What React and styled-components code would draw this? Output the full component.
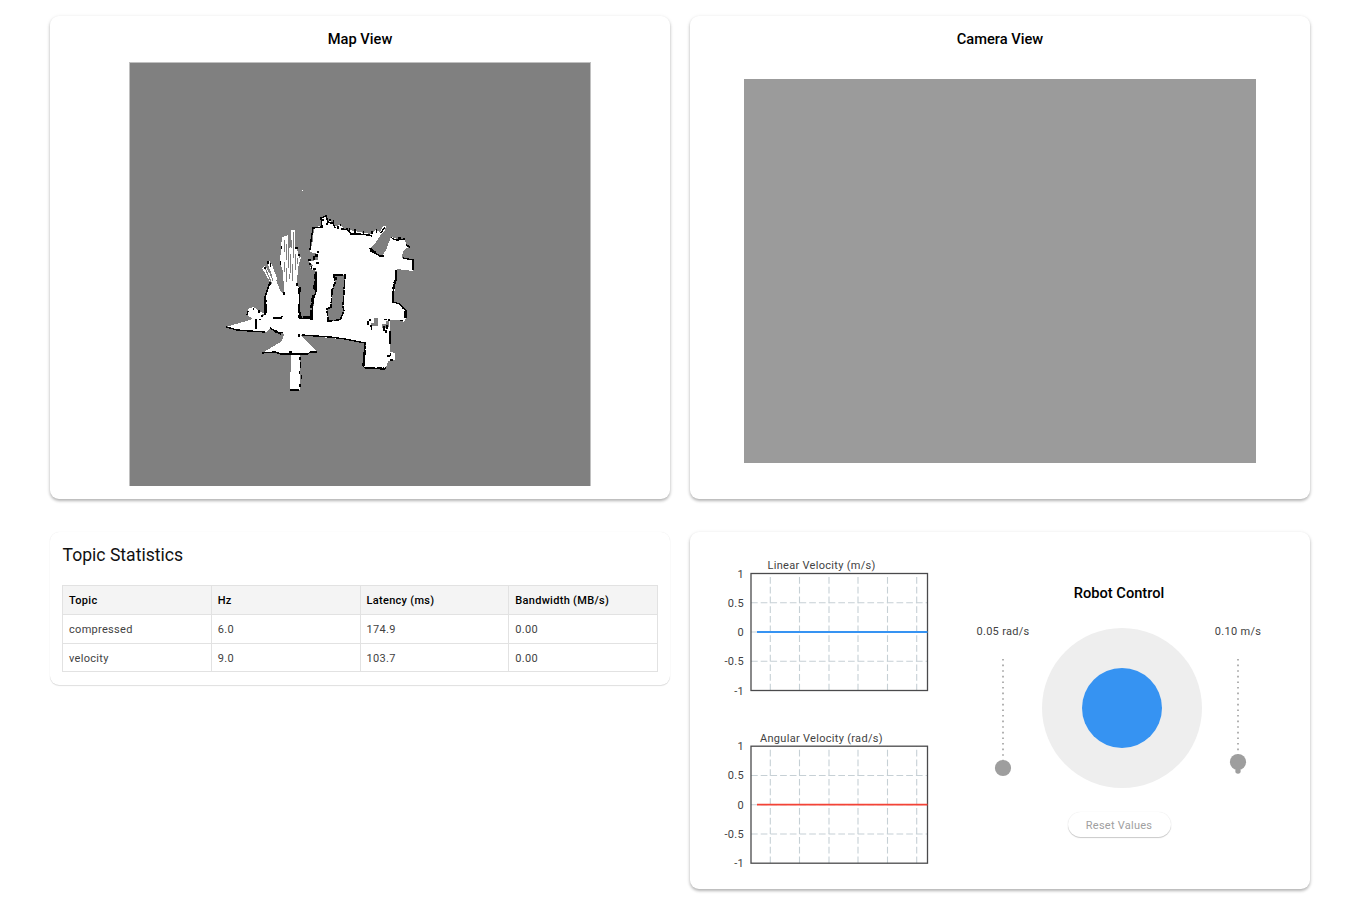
import React from "react";
import styled, { createGlobalStyle } from "styled-components";

const GlobalStyle = createGlobalStyle`
  * { box-sizing: border-box; }
  html, body { margin: 0; padding: 0; background: #fff; overflow: hidden; }
  body { font-family: Roboto, "Liberation Sans", sans-serif; font-size: 11px; letter-spacing: 0.3px; color: #424242; }
`;

const Page = styled.main`
  display: grid;
  grid-template-columns: 620px 620px;
  grid-template-rows: 483px 357px;
  gap: 33px 20px;
  align-items: start;
  height: 898px;
  padding: 16px 0 0 50px;
`;

const Card = styled.section`
  display: flex;
  flex-direction: ${(p) => (p.$row ? "row" : "column")};
  height: ${(p) => p.$height}px;
  background: #fff;
  border-radius: 9px;
  box-shadow: ${(p) =>
    p.$flat
      ? "0 1px 1px rgba(0,0,0,.12), 0 0 1px rgba(0,0,0,.1)"
      : "0 2px 3px rgba(0,0,0,.24), 0 1px 4px rgba(0,0,0,.1)"};
`;

const CardTitle = styled.h2`
  margin: 0;
  font-size: 14.67px;
  font-weight: 500;
  line-height: 20px;
  letter-spacing: 0;
  color: #000;
  text-align: center;
  padding-top: ${(p) => p.$top || 0}px;
`;

const MapCanvas = styled.svg`
  display: block;
  width: 462px;
  height: 424px;
  margin: 13px 0 0 79px;
`;

const CameraFeed = styled.div`
  width: 512px;
  height: 384px;
  margin: 30px 0 0 54px;
  background: #9b9b9b;
`;

const StatsTitle = styled.h2`
  margin: 0;
  padding: 11px 0 0 12.5px;
  font-size: 17.6px;
  font-weight: 400;
  line-height: 24px;
  letter-spacing: 0;
  color: #111;
`;

const Table = styled.table`
  width: 596px;
  margin: 18px 0 0 12px;
  border-collapse: collapse;
  table-layout: fixed;
`;

const HeadCell = styled.th`
  height: 29px;
  padding: 0 6px;
  border: 1px solid #e2e2e2;
  background: #f4f4f4;
  font-weight: 500;
  letter-spacing: 0.3px;
  color: #000;
  text-align: left;
`;

const Cell = styled.td`
  height: 28.5px;
  padding: 2px 6px 0;
  border: 1px solid #e2e2e2;
`;

const Charts = styled.div`
  width: 270px;
  padding-top: 26px;
`;

const ChartSvg = styled.svg`
  display: block;
  width: 250px;
  height: ${(p) => p.$height}px;
  font-size: 11px;
  fill: #424242;
`;

const Control = styled.div`
  width: 318px;
  padding-top: 51px;
`;

const ControlRow = styled.div`
  display: flex;
  height: 185px;
  padding: 25px 0 0 8px;
`;

const SliderBox = styled.div`
  width: ${(p) => p.$width}px;
  margin-top: -3px;
  text-align: center;
  white-space: nowrap;
  line-height: 14px;
`;

const SliderTrack = styled.svg`
  display: block;
  width: 20px;
  height: 130px;
  margin: 16px auto 0;
`;

const JoystickBase = styled.div`
  display: grid;
  place-items: center;
  width: 160px;
  height: 160px;
  margin: 0 0 0 4px;
  border-radius: 50%;
  background: #eee;
`;

const JoystickKnob = styled.div`
  width: 80px;
  height: 80px;
  border-radius: 50%;
  background: #3693f2;
`;

const ResetButton = styled.button`
  display: block;
  width: 103px;
  height: 25px;
  margin: 24px auto 0;
  padding: 2px 0 0;
  border: 0;
  border-radius: 13px;
  background: #fff;
  box-shadow: 0 1px 1px rgba(0,0,0,.2), 0 0 1px rgba(0,0,0,.12);
  font: inherit;
  letter-spacing: 0.25px;
  color: #a0a0a0;
`;

const FREE_SPACE =
  "M314 227L322 226L321 218L326 216L328 221L333 222L334 226L341 225L344 229L350 230L354 231L371 234L375 230L380 232L383 226L386 226L385 230L380 236L376 242L370 248L371 251L382 256L386 250L391 237L397 239L405 239L406 244L410 246L403 251L402 258L414 260L413 271L397 269L396 280L393 303L400 304L403 308L406 310L406 318L404 322L400 320L390 320L390 352L395 353L395 360L388 361L386 368L365 368L363 366L366 343L350 340L300 335L306 340L317 352L302 353L300 355L300 390L290 390L291 354L262 353L274 346L282 341L284 334L270 328L266 332L245 331L226 327L253 319L247 315L248 309L253 307L263 313L265 313L266 297L270 282L262 268L265 266L270 274L272 275L267 262L269 260L272 265L283 294L284 290L283 272L280 262L281 248L282 237L288 235L289 248L291 247L291 230L295 230L295 248L297 249L299 258L301 257L298 268L297 283L299 288L300 318L312 319L316 284L317 271L312 270L309 267L313 266L309 261L318 260L318 254L310 252L313 240Z";
const WALLS =
  "M310 250L311 240L313 228L322 227L321 218L326 216L328 222L333 223L335 228M341 229L348 230L351 234L369 235L372 236M381 233L385 227M370 248L371 251L380 256L384 256M391 237L393 239L397 240L405 239M406 245L410 247M403 258L413 260L413 270M396 270L396 280L394 286L393 302L400 304L403 308L406 310L406 318M390 331L390 344M386 368L384 369L365 368L363 366L365 343L350 340L345 339L330 337L316 336L302 335M262 353L275 352L281 354L308 354L310 352L317 352M290 390L299 390M226 327L237 330L250 331L265 332M265 315L265 297L270 282M299 288L300 318L312 319L313 301L316 291L316 272M270 328L275 331L281 334M256 319L256 329M273 318L281 318L282 316M247 315L248 311";
const HEAVY_WALLS =
  "M311 319V308L313 295M315 290V274M393 300V290L395 280M371 249L376 253M352 234H362M364 366L365 346M366 368H384M266 313V300M299 304V317H310M405 311V318M282 354H300";
const HOLE = "M334 275L345 275L344 292L343 307L344 311L340 320L328 321L327 309L331 307L332 290L335 283Z";
const SPECKS =
  "M322 219h2v2h-2zM326 223h2v2h-2zM330 223h2v1h-2zM337 226h2v3h-2zM343 228h1v2h-1zM354 229h2v4h-2zM363 231h1v3h-1zM371 231h2v3h-2zM376 229h1v4h-1zM398 237h3v2h-3zM315 254h3v3h-3zM313 256h2v4h-2zM316 262h3v2h-3zM308 259h3v2h-3zM311 266h1v3h-1zM267 261h2v3h-2zM264 267h2v2h-2zM270 263h1v4h-1zM295 247h3v2h-3zM280 261h1v4h-1zM281 246h1v3h-1zM298 254h2v2h-2zM299 287h2v5h-2zM296 283h2v3h-2zM283 292h2v3h-2zM269 282h2v3h-2zM367 321h2v4h-2zM369 319h2v2h-2zM371 326h1v4h-1zM370 325h2v2h-2zM384 319h3v1h-3zM383 326h2v5h-2zM386 325h2v4h-2zM385 330h2v3h-2zM388 319h2v2h-2zM387 355h3v2h-3zM390 353h1v3h-1zM390 359h3v2h-3zM400 320h3v1h-3zM299 357h2v3h-2zM300 362h1v6h-1zM299 371h1v3h-1zM301 375h1v4h-1zM299 384h2v3h-2zM275 330h2v3h-2zM279 332h4v1h-4zM298 334h2v3h-2zM289 351h3v2h-3zM253 308h1v2h-1zM258 310h2v3h-2zM261 315h2v2h-2zM259 319h2v1h-2zM335 277h2v3h-2zM313 285h2v4h-2zM329 219h2v2h-2zM340 224h1v2h-1zM346 228h2v2h-2zM349 228h1v3h-1zM333 220h1v2h-1zM317 251h2v2h-2zM309 263h2v2h-2zM313 268h3v2h-3z";
const RAYS =
  "M284.5 240V252M286.5 244V260M288.5 235V268M290.5 254V273M293.5 232V258M295.5 254V270M291.5 240V248M297.5 258V264M286.5 268V282M292.5 264V281M289.5 274V279M284.5 262V272M265 268L272 284M269 270L273 281";

function MapDrawing() {
  return (
    <MapCanvas viewBox="129 62 462 424" shapeRendering="crispEdges">
      <rect x="129" y="62" width="462" height="424" fill="#c0c0c0" />
      <rect x="130" y="63" width="460" height="423" fill="#808080" />
      <path d={FREE_SPACE} fill="#fff" />
      <path d="M302 190h1v1h-1zM391 357h2v2h-2zM251 311h5v2h-5z" fill="#fff" />
      <path d={HOLE} fill="#808080" />
      <path d="M374 318h4v8h-4zM371 323h3v3h-3zM382 324h4v4h-4zM386 321h3v6h-3zM262 314h2v2h-2zM276 280L278 280L283 294L280 290Z" fill="#808080" />
      <path d={RAYS} fill="none" stroke="#808080" strokeWidth="1" />
      <path d={WALLS} fill="none" stroke="#000" strokeWidth="1.4" />
      <path d={HEAVY_WALLS} fill="none" stroke="#000" strokeWidth="2" strokeDasharray="9 2 5 1" />
      <path d={HOLE} fill="none" stroke="#000" strokeWidth="1.6" strokeDasharray="9 1 5 1" />
      <path d={SPECKS} fill="#000" />
    </MapCanvas>
  );
}

const TICKS = ["1", "0.5", "0", "-0.5", "-1"];
const GRID_X = [80.3, 109.5, 139, 168, 197.5, 226.7];

function VelocityChart({ title, titleX, color, top, height }) {
  const step = 29.25;
  return (
    <ChartSvg $height={height}>
      <text x={titleX} y="11">{title}</text>
      {TICKS.map((t, i) => (
        <text key={t} x="54" y={top + i * step + 4} textAnchor="end">{t}</text>
      ))}
      <g stroke="#c6d0d5" strokeWidth="1.1" strokeDasharray="6.7 3">
        {GRID_X.map((x) => (
          <path key={x} d={`M${x} ${top + step * 4}V${top}`} />
        ))}
        {[1, 2, 3].map((i) => (
          <path key={i} d={`M61 ${top + i * step}H238`} />
        ))}
      </g>
      <rect x="61" y={top} width="176.5" height={step * 4} fill="none" stroke="#4a4a4c" strokeWidth="1.3" />
      <path d={`M67 ${top + step * 2}H237.5`} stroke={color} strokeWidth="1.8" />
    </ChartSvg>
  );
}

function SpeedSlider({ label, width, handleY }) {
  return (
    <SliderBox $width={width}>
      {label}
      <SliderTrack>
        <path d="M10 4V118" stroke="#9e9e9e" strokeWidth="1.6" strokeDasharray="1.6 4" />
        {handleY < 112 && <circle cx="10" cy="116" r="2.7" fill="#9e9e9e" />}
        <circle cx="10" cy={handleY} r="8.1" fill="#9e9e9e" />
      </SliderTrack>
    </SliderBox>
  );
}

const COLUMNS = ["Topic", "Hz", "Latency (ms)", "Bandwidth (MB/s)"];
const ROWS = [
  ["compressed", "6.0", "174.9", "0.00"],
  ["velocity", "9.0", "103.7", "0.00"],
];

export default function App() {
  return (
    <>
      <GlobalStyle />
      <Page>
        <Card $height={483}>
          <CardTitle $top={13}>Map View</CardTitle>
          <MapDrawing />
        </Card>
        <Card $height={483}>
          <CardTitle $top={13}>Camera View</CardTitle>
          <CameraFeed />
        </Card>
        <Card $height={153} $flat>
          <StatsTitle>Topic Statistics</StatsTitle>
          <Table>
            <thead>
              <tr>{COLUMNS.map((c) => <HeadCell key={c}>{c}</HeadCell>)}</tr>
            </thead>
            <tbody>
              {ROWS.map((r) => (
                <tr key={r[0]}>{r.map((v, i) => <Cell key={i}>{v}</Cell>)}</tr>
              ))}
            </tbody>
          </Table>
        </Card>
        <Card $height={357} $row>
          <Charts>
            <VelocityChart title="Linear Velocity (m/s)" titleX={77.5} color="#3693f2" top={15.5} height={173} />
            <VelocityChart title="Angular Velocity (rad/s)" titleX={70} color="#f44336" top={15.2} height={150} />
          </Charts>
          <Control>
            <CardTitle>Robot Control</CardTitle>
            <ControlRow>
              <SpeedSlider label="0.05 rad/s" width={70} handleY={113} />
              <JoystickBase>
                <JoystickKnob />
              </JoystickBase>
              <SpeedSlider label="0.10 m/s" width={72} handleY={107} />
            </ControlRow>
            <ResetButton>Reset Values</ResetButton>
          </Control>
        </Card>
      </Page>
    </>
  );
}
